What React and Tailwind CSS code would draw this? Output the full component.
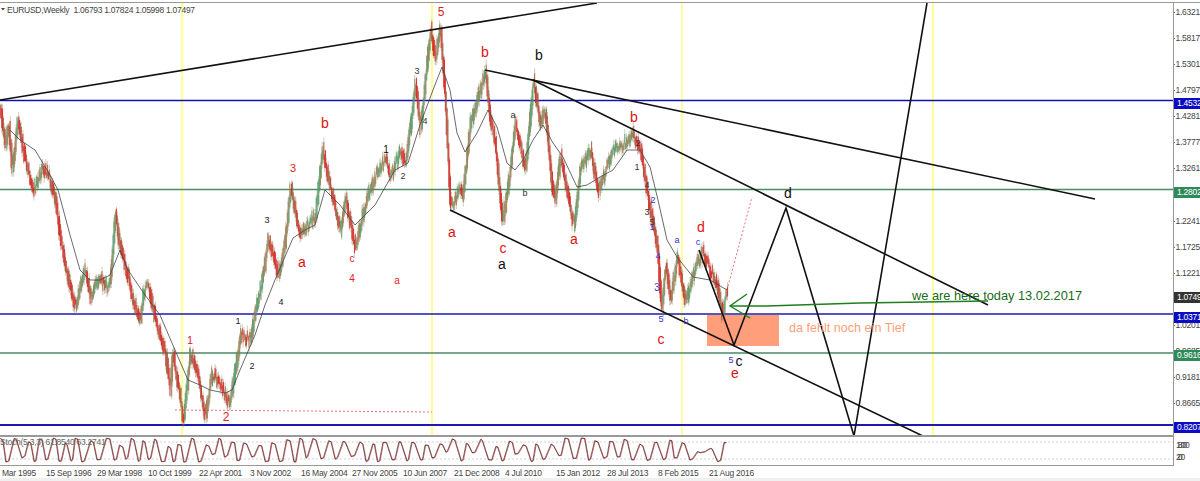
const dates = ["15 Sep 1996", "29 Mar 1998", "10 Oct 1999", "22 Apr 2001", "3 Nov 2002", "16 May 2004", "27 Nov 2005", "10 Jun 2007", "21 Dec 2008", "4 Jul 2010", "15 Jan 2012", "28 Jul 2013", "8 Feb 2015", "21 Aug 2016"];
const ticks = ["1.6321", "1.5817", "1.5301", "1.4797", "1.4281", "1.3777", "1.3261", "1.2757", "1.2241", "1.1725", "1.1221", "1.0705", "1.0201", "0.9685", "0.9181", "0.8665"];
const badges = [
  ["1.4532", "top-[95px] bg-[#0b0bc4]"],
  ["1.2802", "top-[184px] bg-[#2f8a5a]"],
  ["1.0749", "top-[289px] bg-[#333]"],
  ["1.0371", "top-[309px] bg-[#0b0bc4]"],
  ["0.9616", "top-[347px] bg-[#2f8a5a]"],
  ["0.8207", "top-[419px] bg-[#0b0bc4]"],
];

// traced by eye from the chart, page coordinates
const pricePath = [[0,108],[5,150],[8,122],[12,172],[17,122],[25,160],[33,190],[42,168],[50,180],[55,200],[60,240],[65,265],[75,308],[80,285],[85,268],[90,295],[100,278],[105,288],[110,282],[115,212],[118,238],[125,265],[130,290],[140,322],[143,292],[148,285],[155,320],[165,352],[170,390],[172,352],[180,400],[183,423],[190,352],[197,375],[205,415],[212,372],[225,395],[228,404],[232,390],[240,335],[250,340],[255,310],[260,290],[268,240],[278,275],[285,240],[290,187],[300,235],[315,215],[322,148],[328,180],[340,230],[345,200],[355,250],[362,215],[368,195],[375,175],[385,160],[390,178],[400,150],[405,165],[415,85],[420,130],[430,30],[435,60],[440,26],[445,100],[450,207],[460,190],[462,200],[470,125],[485,72],[490,120],[495,145],[502,223],[510,170],[515,123],[525,170],[533,80],[540,125],[545,110],[552,190],[555,200],[560,155],[573,226],[580,170],[590,150],[598,190],[605,170],[612,152],[625,142],[632,132],[640,150],[645,180],[650,210],[657,245],[661,312],[665,265],[670,300],[675,268],[677,257],[685,305],[690,285],[697,262],[702,252],[710,270],[716,282],[722,315],[725,295],[728,296]];
const maPath = [[10,130],[20,140],[35,150],[50,175],[58,190],[70,235],[80,270],[90,280],[100,280],[110,275],[120,250],[128,270],[145,295],[160,315],[175,350],[188,380],[200,385],[210,390],[225,393],[232,390],[240,370],[255,335],[265,305],[275,280],[293,238],[305,230],[315,225],[325,190],[340,205],[355,225],[375,205],[395,170],[408,163],[420,125],[433,90],[442,67],[450,90],[457,133],[465,152],[477,133],[488,110],[497,127],[507,163],[515,170],[523,160],[533,140],[543,125],[553,143],[563,157],[577,187],[587,185],[600,177],[613,170],[627,150],[640,150],[650,167],[658,200],[667,240],[677,257],[693,277],[710,280],[727,290]];

const lines = [
  [0, 100, 597, 3],
  [485, 70, 1095, 199],
  [533, 80, 988, 305],
  [450, 210, 925, 437],
];

const labels = [
  ["5", 441, 16, "#dd2222", 12], ["b", 485, 57, "#dd1111", 14], ["b", 539, 60, "#111", 14], ["b", 634, 122, "#dd1111", 14],
  ["b", 325, 128, "#dd1111", 14], ["3", 293, 172, "#dd2222", 11], ["3", 267, 223, "#222", 9], ["1", 386, 153, "#111", 10],
  ["2", 403, 179, "#333", 9], ["3", 417, 74, "#333", 9], ["4", 425, 124, "#333", 9], ["a", 513, 118, "#333", 9], ["b", 525, 196, "#333", 9],
  ["2", 638, 146, "#333", 9], ["1", 637, 170, "#333", 9], ["4", 647, 188, "#333", 9], ["3", 647, 215, "#333", 9], ["5", 652, 225, "#333", 9],
  ["2", 653, 203, "#3333cc", 9], ["1", 652, 230, "#3333cc", 9],
  ["a", 302, 267, "#dd1111", 14], ["c", 352, 262, "#dd2222", 10], ["4", 352, 282, "#dd2222", 10], ["a", 397, 284, "#dd2222", 10],
  ["a", 452, 237, "#dd1111", 14], ["c", 503, 253, "#dd1111", 14], ["a", 502, 269, "#111", 14], ["a", 574, 244, "#dd1111", 14], ["d", 701, 232, "#dd1111", 14],
  ["1", 190, 344, "#dd2222", 11], ["2", 226, 421, "#dd2222", 12], ["1", 238, 324, "#222", 9], ["2", 252, 369, "#222", 9], ["4", 281, 305, "#222", 9],
  ["a", 677, 243, "#3333cc", 9], ["c", 698, 245, "#3333cc", 9], ["4", 658, 259, "#3333cc", 9], ["3", 657, 291, "#3333cc", 10], ["5", 661, 322, "#3333cc", 9], ["b", 686, 324, "#3333cc", 9],
  ["5", 731, 363, "#3333cc", 9], ["c", 739, 366, "#111", 14], ["e", 735, 378, "#dd1111", 14], ["c", 661, 344, "#dd1111", 14], ["d", 788, 198, "#111", 14],
];

function makeRandom(seed) {
  return () => {
    seed = (seed + 0x6d2b79f5) | 0;
    let t = Math.imul(seed ^ (seed >>> 15), 1 | seed);
    t = (t + Math.imul(t ^ (t >>> 7), 61 | t)) ^ t;
    return ((t ^ (t >>> 14)) >>> 0) / 4294967296;
  };
}

function yAt(path, x) {
  for (let i = 1; i < path.length; i++) {
    if (x <= path[i][0]) {
      const [x0, y0] = path[i - 1];
      const [x1, y1] = path[i];
      return y0 + ((y1 - y0) * (x - x0)) / (x1 - x0);
    }
  }
  return path[path.length - 1][1];
}

function makeBars() {
  const rnd = makeRandom(41);
  const bars = [];
  for (let x = 0; x <= 728; x += 0.85) {
    const c = yAt(pricePath, x);
    const prev = yAt(pricePath, Math.max(0, x - 1.7));
    const noise = (rnd() - 0.5) * 9;
    const down = c > prev + (rnd() - 0.5) * 2;
    const body = 1.5 + rnd() * 3.5;
    bars.push({
      x,
      top: Math.min(c, prev) + noise - body,
      bottom: Math.max(c, prev) + noise + body,
      wick: 1 + rnd() * 4,
      color: down ? (rnd() > 0.3 ? "#e01010" : "#a0522d") : (rnd() > 0.55 ? "#3f9d63" : "#96784a"),
    });
  }
  return bars;
}

function makeOsc() {
  const rnd = makeRandom(12);
  const pts = [];
  let x = 0;
  let up = true;
  while (x < 729) {
    const y = up ? 438 + rnd() * rnd() * 14 : 462 - rnd() * rnd() * 12;
    pts.push([x, y]);
    const mid = x + 1.5 + rnd() * 2;
    pts.push([mid, y + (up ? 2 : -2) * rnd()]);
    x = mid + 2.5 + rnd() * 4;
    up = !up;
  }
  return pts;
}

const bars = makeBars();
const osc = makeOsc();
const toPoints = (pts) => pts.map((p) => p.join(",")).join(" ");

function PriceChart() {
  return (
    <svg viewBox="0 3 1173 432" className="block w-[1173px] h-[432px] font-['Liberation_Sans',sans-serif]">
      {[[182, 2.5, "#ffffa0"], [432, 1.5, "#ffff70"], [682, 2, "#ffffa0"], [933, 1.5, "#ffff70"]].map(([x, w, c]) => (
        <line key={x} x1={x} x2={x} y1="3" y2="435" stroke={c} strokeWidth={w} />
      ))}
      <rect x="707" y="315" width="72" height="31" fill="#ff9e7a" />
      <line x1="0" x2="1173" y1="100.5" y2="100.5" stroke="#1010b0" strokeWidth="1.3" />
      <line x1="0" x2="1173" y1="189.5" y2="189.5" stroke="#4a8a64" strokeWidth="1.5" />
      <line x1="0" x2="1173" y1="314" y2="314" stroke="#1a1ab0" strokeWidth="1.5" />
      <line x1="0" x2="1173" y1="353" y2="353" stroke="#4a8a64" strokeWidth="1.5" />
      <line x1="0" x2="1173" y1="425" y2="425" stroke="#1a1ab0" strokeWidth="2" />
      <line x1="175" y1="410" x2="432" y2="412" stroke="#e05050" strokeWidth="0.8" strokeDasharray="2 2" />
      <line x1="727" y1="290" x2="752" y2="197" stroke="#e05050" strokeWidth="0.8" strokeDasharray="2 2" />
      {bars.map((b) => (
        <g key={b.x}>
          <line x1={b.x} x2={b.x} y1={b.top - b.wick} y2={b.bottom + b.wick} stroke="#8a7a55" strokeWidth="0.4" />
          <line x1={b.x} x2={b.x} y1={b.top} y2={b.bottom} stroke={b.color} strokeWidth="0.8" />
        </g>
      ))}
      <polyline points={toPoints(maPath)} fill="none" stroke="#444" strokeWidth="0.8" />
      {lines.map(([x1, y1, x2, y2]) => (
        <line key={x1} x1={x1} y1={y1} x2={x2} y2={y2} stroke="#111" strokeWidth="1.6" />
      ))}
      <polyline points="699,250 734,345 786,208 854,436 927,3" fill="none" stroke="#111" strokeWidth="1.6" />
      <polyline points="747,294 730,306 750,318" fill="none" stroke="#1e7f1e" strokeWidth="1.4" />
      <polyline points="730,306 767,306 860,303 988,301" fill="none" stroke="#1e7f1e" strokeWidth="1.4" />
      {labels.map(([t, x, y, c, s], i) => (
        <text key={i} x={x} y={y} fill={c} fontSize={s} textAnchor="middle">{t}</text>
      ))}
      <text x="912" y="300" fill="#1a6a1a" fontSize="12.8">we are here today 13.02.2017</text>
      <text x="789" y="332" fill="#ff9e7a" fontSize="12.6">da fehlt noch ein Tief</text>
      <path d="M1 8 L5 8 L3 10.5 Z" fill="#444" />
      <text x="7" y="13" fill="#444" fontSize="8.5" className="whitespace-pre tracking-[-0.28px]">EURUSD,Weekly  1.06793 1.07824 1.05998 1.07497</text>
    </svg>
  );
}

function Oscillator() {
  return (
    <svg viewBox="0 437 1173 28" className="block w-[1173px] h-[28px] font-['Liberation_Sans',sans-serif]">
      <line x1="0" x2="1173" y1="442" y2="442" stroke="#bbb" strokeWidth="0.7" strokeDasharray="2 2" />
      <line x1="0" x2="1173" y1="459" y2="459" stroke="#bbb" strokeWidth="0.7" strokeDasharray="2 2" />
      <polyline points={toPoints(osc)} fill="none" stroke="#c83030" strokeWidth="0.7" transform="translate(0.6 0.3)" />
      <polyline points={toPoints(osc)} fill="none" stroke="#2a1515" strokeWidth="0.6" />
      <text x="0" y="445" fill="#666" fontSize="8.5" className="tracking-[-0.25px]">Stoch(5,3,3) 61.8540 63.2741</text>
    </svg>
  );
}

function PriceAxis() {
  return (
    <div className="w-[26px] overflow-hidden text-[8.5px] tracking-[-0.25px] leading-[10px] text-[#444]">
      <div className="relative h-[434px] pt-[4px] flex flex-col">
        {ticks.map((t) => (
          <div key={t} className="h-[26.07px] shrink-0 flex items-start whitespace-nowrap">
            <span className="w-[2px] h-px bg-[#777] mt-[5px] mr-[1px]" />
            {t}
          </div>
        ))}
        {badges.map(([t, cls]) => (
          <div key={t} className={`absolute left-0 w-full h-[11px] text-white pl-[3px] ${cls}`}>{t}</div>
        ))}
      </div>
      <div className="h-[28px] flex flex-col justify-between py-[3px] pl-[2px]">
        <div className="grid">
          <span className="[grid-area:1/1]">100</span>
          <span className="[grid-area:1/1] pl-[2px]">80</span>
        </div>
        <div className="grid">
          <span className="[grid-area:1/1]">20</span>
          <span className="[grid-area:1/1] pl-[2px]">0</span>
        </div>
      </div>
    </div>
  );
}

export default function App() {
  return (
    <div className="w-[1200px] h-[481px] overflow-hidden bg-white pt-[2px] font-['Liberation_Sans',sans-serif]">
      <div className="flex border-t-[1px] border-[#999]">
        <div className="w-[1174px] border-r border-[#999]">
          <PriceChart />
          <div className="h-[2px] bg-[#999]" />
          <Oscillator />
        </div>
        <PriceAxis />
      </div>
      <div className="w-[1174px] h-[13px] border-t border-[#999] flex text-[8.5px] tracking-[-0.25px] leading-[11px] text-[#444] whitespace-nowrap">
        <div className="w-[46px] pl-[2px] pt-[2px]">Mar 1995</div>
        {dates.map((d) => (
          <div key={d} className="w-[51px] pt-[2px]">{d}</div>
        ))}
      </div>
      <div className="h-[3px] bg-[#f0f0f0]" />
    </div>
  );
}
